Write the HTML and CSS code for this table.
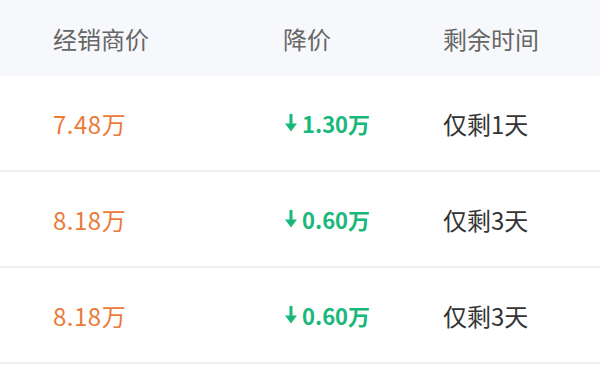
FILE: index.html
```html
<!DOCTYPE html>
<html lang="zh">
<head>
<meta charset="utf-8">
<link rel="stylesheet" href="styles.css">
</head>
<body>
<div class="table">
  <div class="row head">
    <div class="cell">经销商价</div>
    <div class="cell">降价</div>
    <div class="cell">剩余时间</div>
  </div>
  <div class="row">
    <div class="cell price">7.48万</div>
    <div class="cell drop"><svg class="arrow" viewBox="0 0 12 18" width="12" height="18"><rect x="4.5" y="0" width="3" height="11" fill="#18b87a"/><path d="M0 9.5 L12 9.5 L6 17.5 Z" fill="#18b87a"/></svg><span>1.30万</span></div>
    <div class="cell left">仅剩1天</div>
  </div>
  <div class="row">
    <div class="cell price">8.18万</div>
    <div class="cell drop"><svg class="arrow" viewBox="0 0 12 18" width="12" height="18"><rect x="4.5" y="0" width="3" height="11" fill="#18b87a"/><path d="M0 9.5 L12 9.5 L6 17.5 Z" fill="#18b87a"/></svg><span>0.60万</span></div>
    <div class="cell left">仅剩3天</div>
  </div>
  <div class="row">
    <div class="cell price">8.18万</div>
    <div class="cell drop"><svg class="arrow" viewBox="0 0 12 18" width="12" height="18"><rect x="4.5" y="0" width="3" height="11" fill="#18b87a"/><path d="M0 9.5 L12 9.5 L6 17.5 Z" fill="#18b87a"/></svg><span>0.60万</span></div>
    <div class="cell left">仅剩3天</div>
  </div>
</div>
</body>
</html>
```
FILE: styles.css
```css
html, body {
  margin: 0;
  padding: 0;
  background: #ffffff;
}
body {
  font-family: "Noto Sans CJK SC", "Noto Sans", sans-serif;
  width: 600px;
  height: 372px;
  overflow: hidden;
}
.table {
  display: flex;
  flex-direction: column;
}
.row {
  display: grid;
  grid-template-columns: 230px 160px 1fr;
  align-items: center;
  padding-left: 53px;
  height: 96px;
  border-bottom: 2px solid #f0f0f2;
  box-sizing: border-box;
}
.row.head {
  height: 76px;
  background: #f7f8fb;
  border-bottom: none;
}
.cell {
  font-size: 24px;
  white-space: nowrap;
}
.head .cell {
  color: #666666;
}
.price {
  color: #ec7a3a;
  letter-spacing: 0.5px;
}
.drop {
  display: flex;
  align-items: center;
  gap: 5px;
  color: #18b87a;
  font-weight: 700;
  font-size: 22px;
  padding-left: 2px;
}
.arrow {
  display: block;
  flex: none;
}
.left {
  color: #333333;
}
```
